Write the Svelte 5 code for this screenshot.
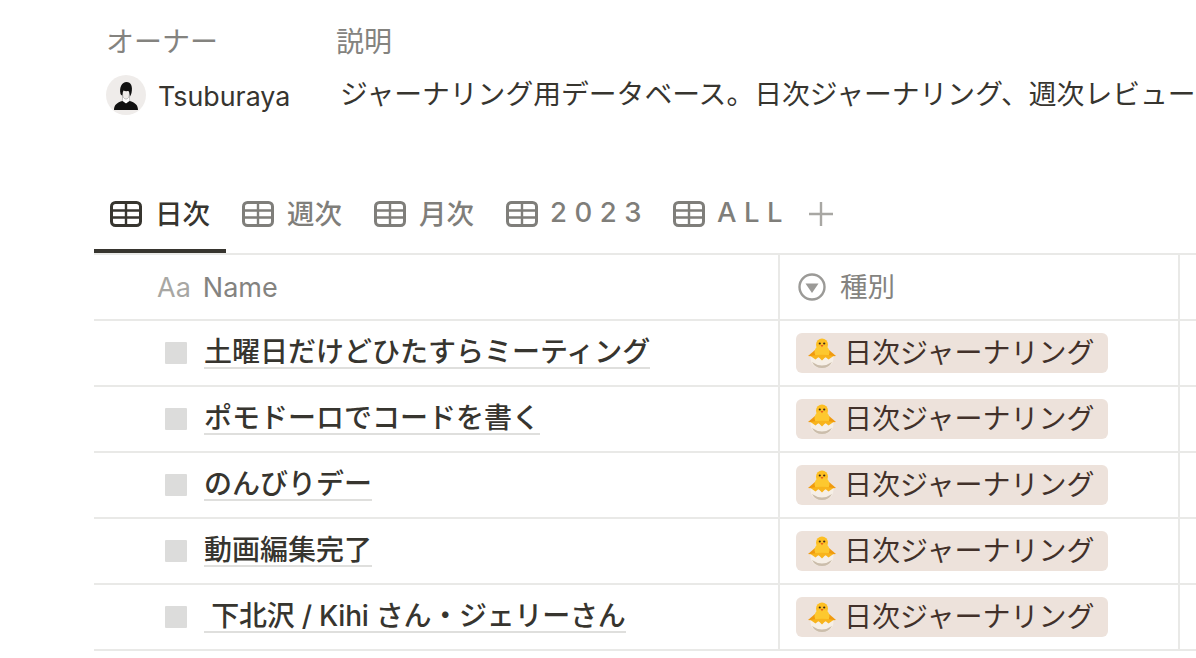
<script>
	const tabs = [
		{ label: '日次', active: true },
		{ label: '週次' },
		{ label: '月次' },
		{ label: '2023', spaced: true },
		{ label: 'ALL', spaced: true }
	]

	const rows = [
		{ name: '土曜日だけどひたすらミーティング' },
		{ name: 'ポモドーロでコードを書く' },
		{ name: 'のんびりデー' },
		{ name: '動画編集完了' },
		{ name: ' 下北沢 / Kihi さん・ジェリーさん', pre: true }
	]
</script>

{#snippet tableIcon()}
	<svg class="table-icon" viewBox="0 0 32 26" width="32" height="26">
		<rect x="1.5" y="1.5" width="29" height="23" rx="4" fill="none" stroke="currentColor" stroke-width="3" />
		<path d="M2 9.500h28M2 16.500h28M16 2v22" fill="none" stroke="currentColor" stroke-width="2.400" />
	</svg>
{/snippet}

{#snippet chick()}
	<svg class="chick" viewBox="0 0 28 30" width="28" height="30">
		<path d="M0 18 L7 12 L10 19 Z" fill="#f09a0e" />
		<path d="M28 18 L21 12 L18 19 Z" fill="#f09a0e" />
		<circle cx="14" cy="6.500" r="6" fill="#fdbf23" />
		<ellipse cx="14" cy="14" rx="7.500" ry="7" fill="#fdc82f" />
		<circle cx="11.800" cy="5.500" r="1.100" fill="#3a2a1a" />
		<circle cx="16.200" cy="5.500" r="1.100" fill="#3a2a1a" />
		<path d="M12.500 7h3l-1.500 2.200z" fill="#e8601a" />
		<path d="M2.500 18 Q14 21 25.500 18 Q26 30 14 30 Q2 30 2.500 18 Z" fill="#f6efe6" />
		<path d="M2.500 18 L7.500 21.500 L10.500 19 L14 22.500 L17.500 19 L20.500 21.500 L25.500 18 Q14 15.500 2.500 18 Z" fill="#f8b41c" />
		<path d="M4 24 Q14 31 24 24 Q21 30 14 30 Q7 30 4 24 Z" fill="#cbbdab" />
	</svg>
{/snippet}

<div class="page">
	<div class="props">
		<div class="prop owner">
			<div class="prop-label">オーナー</div>
			<div class="person">
				<svg class="avatar" viewBox="0 0 40 40" width="40" height="40">
					<circle cx="20" cy="20" r="20" fill="#efecea" />
					<path d="M16.500 18c0 4 1.500 6 3.500 6s3.500-2 3.500-6v5.500c0 2 .5 3 1 3.500l-4.500 2-4.500-2c.5-.5 1-1.500 1-3.500z" fill="#fff" stroke="#999" stroke-width=".6" />
					<path d="M14.500 19c-1.500-7 1.500-12 6-12s6.500 4.500 5 11c-.3 1.200-.8 2.500-1.500 3.500-.2-2-.5-4-1.500-5.500-2 .3-4 .2-5-.5-.7 1.500-1 3.500-1.200 5-.8-.3-1.500-.8-1.800-1.500z" fill="#111" />
					<path d="M8 35c0-5 3-7.500 8.500-9l3.500 2.500 3.500-2.500c5.500 1.500 8.500 4 8.500 9z" fill="#111" />
				</svg>
				<span class="person-name">Tsuburaya</span>
			</div>
		</div>
		<div class="prop desc">
			<div class="prop-label">説明</div>
			<div class="desc-text">ジャーナリング用データベース。日次ジャーナリング、週次レビュー</div>
		</div>
	</div>

	<div class="tabs">
		{#each tabs as tab}
			<div class="tab" class:active={tab.active}>
				{@render tableIcon()}
				<span class="tab-label" class:spaced={tab.spaced}>{tab.label}</span>
			</div>
		{/each}
		<svg class="plus" viewBox="0 0 26 26" width="26" height="26">
			<path d="M13 1v24M1 13h24" stroke="currentColor" stroke-width="2.400" fill="none" />
		</svg>
	</div>

	<div class="table">
		<div class="row head">
			<div class="cell name-cell">
				<span class="aa">Aa</span>
				<span>Name</span>
			</div>
			<div class="cell type-cell">
				<svg class="select-icon" viewBox="0 0 28 28" width="28" height="28">
					<circle cx="14" cy="14" r="12.500" fill="none" stroke="currentColor" stroke-width="2.400" />
					<path d="M7.500 10.500h13L14 20z" fill="currentColor" />
				</svg>
				<span class="type-label">種別</span>
			</div>
			<div class="cell rest"></div>
		</div>
		{#each rows as row}
			<div class="row">
				<div class="cell name-cell body">
					<span class="box"></span>
					<span class="title" class:pre={row.pre}>{row.name}</span>
				</div>
				<div class="cell type-cell body">
					<span class="tag">{@render chick()}<span class="tag-text">日次ジャーナリング</span></span>
				</div>
				<div class="cell rest"></div>
			</div>
		{/each}
	</div>
</div>

<style>
	:global(body) {
		margin: 0;
		background: #fff;
	}

	.page {
		width: 1196px;
		height: 658px;
		overflow: hidden;
		padding-left: 94px;
		box-sizing: border-box;
		font-family: Inter, "Noto Sans CJK JP", sans-serif;
		color: #37352f;
	}

	.props {
		display: flex;
		height: 188px;
		padding-top: 24px;
		box-sizing: border-box;
	}

	.prop-label {
		height: 36px;
		line-height: 36px;
		font-size: 28px;
		color: #84837f;
	}

	.owner {
		width: 242px;
		padding-left: 12px;
		box-sizing: border-box;
		flex: none;
	}

	.desc {
		flex: none;
		width: 900px;
		white-space: nowrap;
	}

	.person {
		display: flex;
		align-items: center;
		gap: 12px;
		margin-top: 15px;
		height: 40px;
		font-size: 26.800px;
		line-height: 40px;
	}

	.person-name {
		margin-top: 1px;
	}

	.avatar {
		flex: none;
	}

	.desc-text {
		margin-top: 14px;
		margin-left: 4px;
		font-size: 27.800px;
		line-height: 40px;
	}

	.tabs {
		display: flex;
		height: 65px;
		align-items: flex-start;
		border-bottom: 2px solid #e9e9e7;
		color: #7f7e7a;
		font-size: 27.500px;
		font-weight: 500;
	}

	.tab {
		display: flex;
		align-items: center;
		gap: 13px;
		height: 65px;
		padding: 0 16px 14px;
		box-sizing: border-box;
	}

	.tab.active {
		color: #37352f;
		border-bottom: 4px solid #37352f;
		padding-bottom: 10px;
	}

	.tab-label {
		margin-bottom: 3px;
	}

	.spaced {
		letter-spacing: 7.500px;
		margin-right: -8px;
		margin-left: -1px;
	}

	.plus {
		margin: 13px 0 0 10px;
		color: #a8a7a3;
	}

	.table {
		width: 1200px;
	}

	.row {
		display: flex;
		height: 66px;
		border-bottom: 2px solid #e9e9e7;
		box-sizing: border-box;
	}

	.cell {
		display: flex;
		align-items: center;
		box-sizing: border-box;
	}

	.name-cell {
		width: 686px;
		border-right: 2px solid #e9e9e7;
		padding-left: 63px;
		flex: none;
	}

	.type-cell {
		width: 400px;
		border-right: 2px solid #e9e9e7;
		flex: none;
	}

	.rest {
		flex: 1;
	}

	.head {
		color: #84837f;
		font-size: 27px;
	}

	.aa {
		color: #a8a7a3;
		margin-right: 12px;
	}

	.head .type-cell {
		padding-left: 18px;
		gap: 14px;
	}

	.select-icon {
		color: #9b9a97;
	}

	.type-label {
		margin-bottom: 4px;
		font-size: 27.500px;
	}

	.name-cell.body {
		padding-left: 71px;
	}

	.box {
		width: 22px;
		height: 22px;
		background: #dcdcdb;
		border-radius: 1px;
		flex: none;
		margin-right: 17px;
	}

	.title {
		font-size: 28px;
		font-weight: 500;
		line-height: 30px;
		border-bottom: 2px solid #dfdfdd;
		white-space: nowrap;
	}

	.pre {
		white-space: pre;
		letter-spacing: -0.250px;
	}

	.type-cell.body {
		padding-left: 16px;
	}

	.tag {
		display: flex;
		align-items: center;
		gap: 8px;
		height: 40px;
		width: 312px;
		padding-left: 12px;
		box-sizing: border-box;
		background: #ede2db;
		border-radius: 6px;
		color: #42312a;
		font-size: 28px;
		white-space: nowrap;
	}

	.tag-text {
		margin-bottom: 4px;
	}

	.chick {
		flex: none;
	}
</style>
